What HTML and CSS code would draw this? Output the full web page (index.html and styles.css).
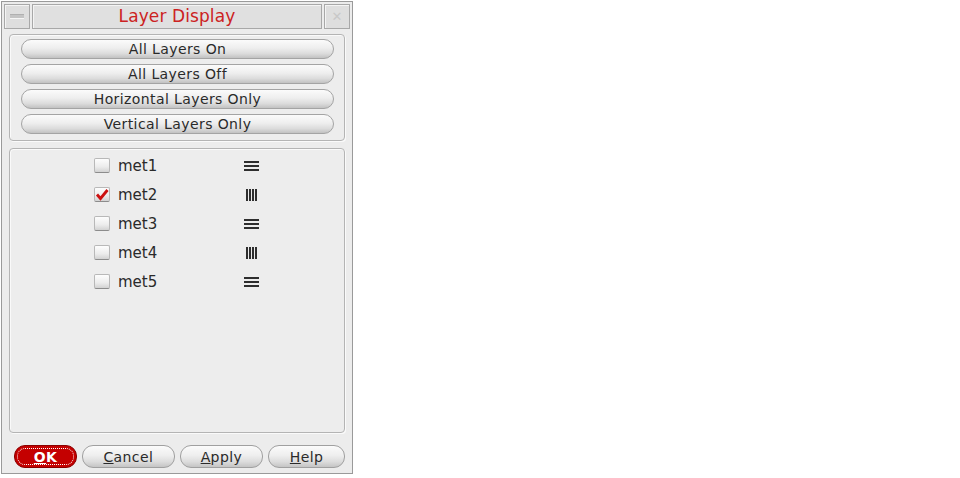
FILE: index.html
```html
<!DOCTYPE html>
<html>
<head>
<meta charset="utf-8">
<title>Layer Display</title>
<link rel="stylesheet" href="styles.css">
</head>
<body>
<div class="window">
  <div class="titlebar">
    <div class="tb-btn"><span class="min-glyph"></span></div>
    <div class="tb-title">Layer Display</div>
    <div class="tb-btn close"><span class="close-glyph">✕</span></div>
  </div>
  <div class="content">
    <div class="group actions">
      <button class="pill">All Layers On</button>
      <button class="pill">All Layers Off</button>
      <button class="pill">Horizontal Layers Only</button>
      <button class="pill">Vertical Layers Only</button>
    </div>
    <div class="group layers">
      <div class="row">
        <span class="check"></span><span class="name">met1</span>
        <span class="hicon"><i></i><i></i><i></i></span>
      </div>
      <div class="row">
        <span class="check on"><svg viewBox="0 0 16 15" width="16" height="15"><path d="M3 7.5 L6.5 11.5 L13.5 3" fill="none" stroke="#cc1111" stroke-width="2.8" stroke-linejoin="miter"/></svg></span><span class="name">met2</span>
        <span class="vicon"><i></i><i></i><i></i><i></i></span>
      </div>
      <div class="row">
        <span class="check"></span><span class="name">met3</span>
        <span class="hicon"><i></i><i></i><i></i></span>
      </div>
      <div class="row">
        <span class="check"></span><span class="name">met4</span>
        <span class="vicon"><i></i><i></i><i></i><i></i></span>
      </div>
      <div class="row">
        <span class="check"></span><span class="name">met5</span>
        <span class="hicon"><i></i><i></i><i></i></span>
      </div>
    </div>
    <div class="footer">
      <button class="fbtn ok"><span class="focus"><u>O</u>K</span></button>
      <button class="fbtn cancel"><u>C</u>ancel</button>
      <button class="fbtn apply"><u>A</u>pply</button>
      <button class="fbtn help"><u>H</u>elp</button>
    </div>
  </div>
</div>
</body>
</html>
```
FILE: styles.css
```css
html, body {
  margin: 0;
  padding: 0;
  background: #ffffff;
}
body {
  font-family: "DejaVu Sans", "Liberation Sans", sans-serif;
  font-size: 14px;
  color: #2a2a2a;
}
.window {
  margin: 1px 0 0 1px;
  width: 350px;
  height: 471px;
  border: 1px solid #9a9a9a;
  background: #ececec;
  display: flex;
  flex-direction: column;
}
.titlebar {
  display: flex;
  gap: 2px;
  margin: 2px 2px 0 2px;
  height: 25px;
}
.tb-btn {
  width: 24px;
  height: 23px;
  border: 1px solid #a8a8a8;
  background: #dedede;
  box-shadow: inset 1px 1px 0 #f4f4f4;
  display: flex;
  align-items: center;
  justify-content: center;
}
.min-glyph {
  display: block;
  width: 14px;
  height: 3px;
  background: #c4c4c4;
  border-top: 1px solid #b0b0b0;
  border-bottom: 1px solid #f6f6f6;
}
.close-glyph {
  color: #c8c8c8;
  font-size: 13px;
  line-height: 1;
}
.tb-title {
  flex: 1;
  height: 23px;
  border: 1px solid #a8a8a8;
  background: #e0e0e0;
  box-shadow: inset 1px 1px 0 #f4f4f4;
  color: #cc2222;
  font-size: 17px;
  letter-spacing: 0.1px;
  line-height: 23px;
  text-align: center;
}
.content {
  flex: 1;
  display: flex;
  flex-direction: column;
  padding: 5px 7px 4px 7px;
}
.group {
  border: 1px solid #b4b4b4;
  border-radius: 4px;
  box-shadow: inset 1px 1px 0 #fafafa, 1px 1px 0 #fafafa;
  background: #ededed;
}
.actions {
  padding: 4px 10px 0 11px;
  display: flex;
  flex-direction: column;
  gap: 5px;
  height: 101px;
}
.pill {
  height: 20px;
  width: 313px;
  border: 1px solid #a4a4a4;
  border-radius: 10px;
  background: linear-gradient(#fbfbfb 0%, #eeeeee 45%, #dcdcdc 75%, #c2c2c2 100%);
  font-family: inherit;
  font-size: 14px;
  letter-spacing: 0.4px;
  color: #2a2a2a;
  padding: 0;
  line-height: 18px;
}
.layers {
  margin-top: 7px;
  height: 281px;
  padding-top: 2px;
  display: flex;
  flex-direction: column;
}
.row {
  height: 29px;
  display: flex;
  align-items: center;
  padding-left: 84px;
}
.check {
  width: 14px;
  height: 13px;
  border: 1px solid #b8b8b8;
  border-bottom-color: #8c8c8c;
  border-radius: 2px;
  background: linear-gradient(#fdfdfd, #ececec 60%, #d2d2d2);
  position: relative;
}
.check svg {
  position: absolute;
  left: -1px;
  top: -1px;
}
.name {
  margin-left: 8px;
  font-size: 15px;
  width: 126px;
}
.hicon {
  display: flex;
  flex-direction: column;
  gap: 2px;
  width: 15px;
}
.hicon i {
  display: block;
  height: 2px;
  background: #2e2e2e;
}
.vicon {
  display: flex;
  gap: 1px;
  height: 12px;
  margin-left: 2px;
}
.vicon i {
  display: block;
  width: 2px;
  background: #2e2e2e;
}
.footer {
  margin-top: 12px;
  display: flex;
  gap: 5px;
  padding-left: 5px;
}
.fbtn {
  height: 23px;
  border: 1px solid #a0a0a0;
  border-radius: 11px;
  background: linear-gradient(#fbfbfb 0%, #eeeeee 45%, #dcdcdc 75%, #c4c4c4 100%);
  font-family: inherit;
  font-size: 14px;
  color: #2a2a2a;
  padding: 0;
  letter-spacing: 0.4px;
}
.ok {
  width: 64px;
  background: #c40000;
  border-color: #8a0000;
  color: #ffffff;
  font-weight: bold;
  padding: 2px;
}
.ok .focus {
  display: flex;
  align-items: center;
  justify-content: center;
  height: 100%;
  border: 1px dotted #ffffff;
  border-radius: 8px;
  box-sizing: border-box;
}
.cancel { width: 94px; }
.apply { width: 85px; }
.help { width: 78px; }
```
